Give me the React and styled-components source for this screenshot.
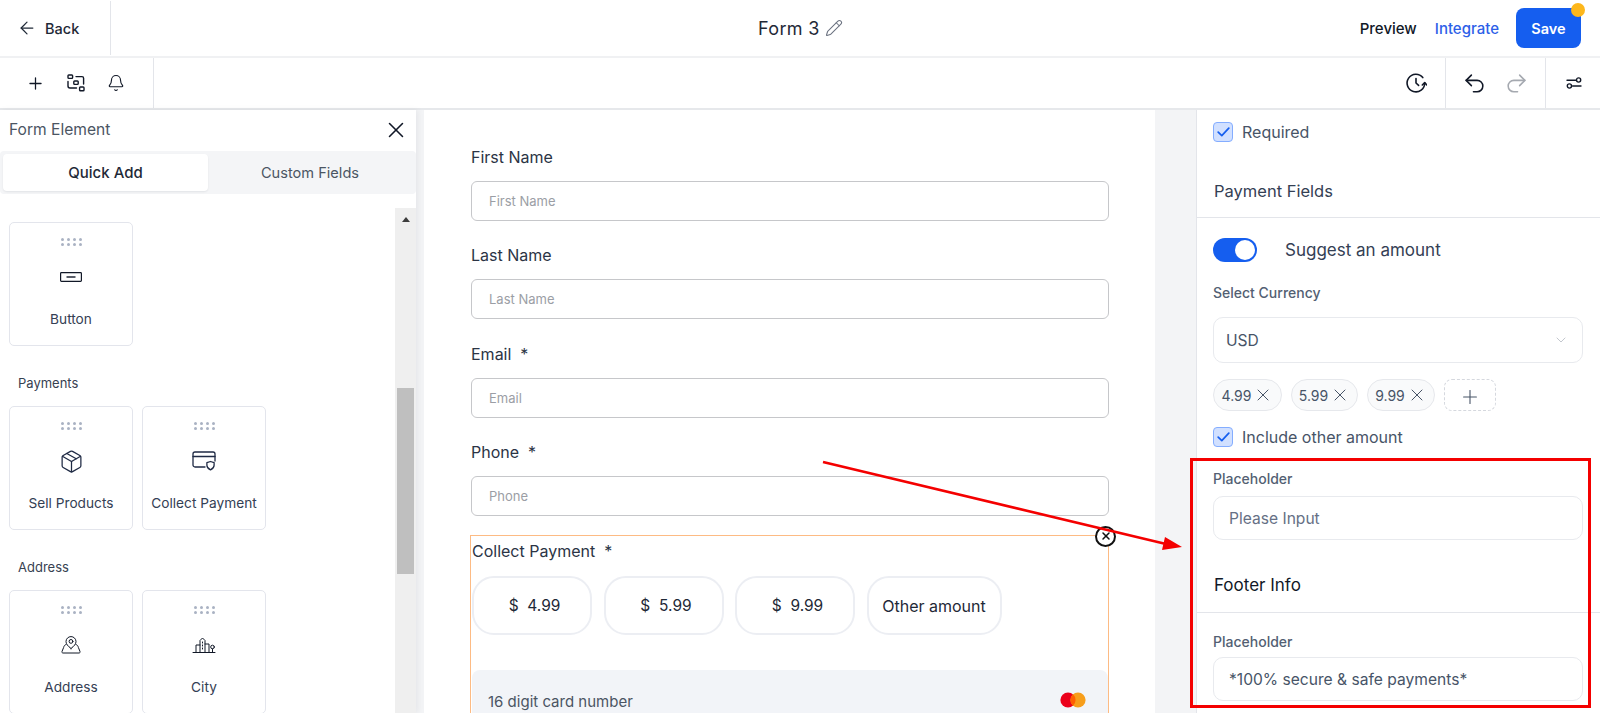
import React from "react";
import styled, { createGlobalStyle } from "styled-components";
import { ArrowLeft, Plus, Bell, Undo2, Redo2, X, Pencil, Package, ChevronDown } from "lucide-react";

const GlobalStyle = createGlobalStyle`
  html, body { margin: 0; padding: 0; background: #fff; }
  * { box-sizing: border-box; }
  body { font-family: Inter, "Noto Sans", sans-serif; color: #1f2937; }
`;

const Page = styled.div`
  position: relative;
  width: 1600px;
  height: 713px;
  overflow: hidden;
  display: flex;
  flex-direction: column;
  background: #fff;
`;

const Header = styled.header`
  height: 58px;
  flex: none;
  display: flex;
  align-items: center;
  border-bottom: 2px solid #f0f1f3;
`;

const BackSlot = styled.div`
  width: 111px;
  height: 54px;
  display: flex;
  align-items: center;
  gap: 8px;
  padding-left: 17px;
  font-size: 14.5px;
  font-weight: 500;
  color: #1f2937;
  border-right: 1px solid #e3e5ea;
`;

const Title = styled.div`
  flex: 1;
  display: flex;
  justify-content: center;
  align-items: center;
  gap: 5px;
  font-size: 18px;
  letter-spacing: 0.3px;
  color: #1f2937;
  padding-left: 130px;
  svg { color: #6b7280; }
`;

const HeaderActions = styled.div`
  display: flex;
  align-items: center;
  padding-right: 19px;
`;

const TextAction = styled.span`
  font-size: 15px;
  font-weight: 500;
  color: ${(p) => (p.$accent ? "#2d5fe8" : "#111827")};
  margin-right: ${(p) => p.$gap}px;
`;

const SaveButton = styled.div`
  position: relative;
  width: 65px;
  height: 40px;
  border-radius: 8px;
  background: #155eef;
  color: #fff;
  font-size: 14.5px;
  font-weight: 600;
  display: flex;
  align-items: center;
  justify-content: center;
`;

const SaveDot = styled.span`
  position: absolute;
  top: -5px;
  right: -4px;
  width: 14px;
  height: 14px;
  border-radius: 50%;
  background: #fdb71c;
`;

const Toolbar = styled.div`
  height: 52px;
  flex: none;
  display: flex;
  align-items: stretch;
  justify-content: space-between;
  border-bottom: 2px solid #e6e8eb;
`;

const ToolGroup = styled.div`
  display: flex;
  align-items: center;
  gap: ${(p) => p.$gap || 0}px;
  padding: ${(p) => p.$pad || "0"};
  width: ${(p) => (p.$w ? `${p.$w}px` : "auto")};
  border-right: ${(p) => (p.$right ? "1px solid #e3e5ea" : "none")};
  border-left: ${(p) => (p.$left ? "1px solid #e3e5ea" : "none")};
  color: #111827;
`;

const ToolCluster = styled.div`
  display: flex;
  align-items: stretch;
`;

const Workspace = styled.div`
  flex: 1;
  min-height: 0;
  display: flex;
  background: #f3f4f6;
`;

const LeftPanel = styled.aside`
  width: 416px;
  flex: none;
  display: flex;
  flex-direction: column;
  background: #fff;
  box-shadow: 2px 0 6px rgba(16, 24, 40, 0.06);
`;

const PanelHead = styled.div`
  height: 41px;
  flex: none;
  display: flex;
  align-items: center;
  justify-content: space-between;
  padding: 0 7px 2px 9px;
  font-size: 15.6px;
  color: #4b5563;
  svg { color: #111827; }
`;

const Tabs = styled.div`
  height: 43px;
  flex: none;
  display: flex;
  padding: 3px 0 3px 3px;
  background: #f4f5f7;
  border-radius: 4px;
`;

const Tab = styled.div`
  width: ${(p) => (p.$active ? "205px" : "auto")};
  flex: ${(p) => (p.$active ? "none" : 1)};
  display: flex;
  align-items: center;
  justify-content: center;
  padding-right: ${(p) => (p.$active ? 0 : 4)}px;
  font-size: ${(p) => (p.$active ? 15 : 14.6)}px;
  font-weight: ${(p) => (p.$active ? 500 : 400)};
  color: ${(p) => (p.$active ? "#1f2937" : "#4b5563")};
  background: ${(p) => (p.$active ? "#fff" : "transparent")};
  border-radius: 4px;
  box-shadow: ${(p) => (p.$active ? "0 1px 2px rgba(16,24,40,.08)" : "none")};
`;

const PaletteArea = styled.div`
  flex: 1;
  min-height: 0;
  display: flex;
`;

const Palette = styled.div`
  flex: 1;
  overflow: hidden;
  padding: 28px 0 0 9px;
`;

const CardRow = styled.div`
  display: flex;
  gap: 9px;
`;

const GroupLabel = styled.div`
  height: 60px;
  padding: 27px 0 0 9px;
  font-size: 13px;
  line-height: 20px;
  color: #374151;
`;

const ElementCard = styled.div`
  width: 124px;
  height: 124px;
  flex: none;
  display: flex;
  flex-direction: column;
  align-items: center;
  border: 1px solid #e3e5ec;
  border-radius: 5px;
  background: #fff;
  padding-top: 15px;
`;

const Grip = styled.div`
  display: grid;
  grid-template-columns: repeat(4, 3px);
  gap: 2px 3px;
  margin-bottom: 16px;
  i {
    width: 3px;
    height: 3px;
    border-radius: 50%;
    background: #aab2c3;
  }
`;

const CardIcon = styled.div`
  height: 30px;
  display: flex;
  align-items: center;
  justify-content: center;
  color: #1f2a44;
`;

const CardName = styled.div`
  margin-top: 18px;
  font-size: 13.7px;
  line-height: 18px;
  color: #344054;
  white-space: nowrap;
`;

const ScrollTrack = styled.div`
  width: 21px;
  flex: none;
  margin-top: 14px;
  background: #efefef;
  display: flex;
  flex-direction: column;
  align-items: center;
`;

const ScrollArrow = styled.div`
  margin-top: 9px;
  width: 0;
  height: 0;
  border-left: 4px solid transparent;
  border-right: 4px solid transparent;
  border-bottom: 5px solid #3d3d3d;
`;

const ScrollThumb = styled.div`
  width: 17px;
  height: 186px;
  margin-top: 166px;
  background: #bfbfbf;
`;

const FormCard = styled.main`
  width: 731px;
  flex: none;
  margin-left: 8px;
  background: #fff;
  padding: 35.5px 46px 0 47px;
  overflow: hidden;
`;

const Field = styled.div`
  height: 98.5px;
`;

const FieldLabel = styled.div`
  font-size: 16px;
  line-height: 22px;
  color: #2b3445;
  margin-bottom: 13px;
`;

const InputBox = styled.div`
  height: 40px;
  border: 1px solid #c6c7ca;
  border-radius: 6px;
  display: flex;
  align-items: center;
  padding: 0 17px;
  font-size: 13px;
  color: #9b9ea5;
`;

const PaymentBox = styled.section`
  position: relative;
  height: 240px;
  margin: -5px 0 0 -1px;
  border: 1px solid #fdbb84;
  padding: 4.5px 0 0 1px;
`;

const PaymentLabel = styled(FieldLabel)`
  margin-bottom: 14px;
`;

const CloseBubble = styled.div`
  position: absolute;
  top: -10px;
  right: -8px;
  width: 21px;
  height: 21px;
  border-radius: 50%;
  border: 2px solid #111;
  background: #fff;
  color: #111;
  display: flex;
  align-items: center;
  justify-content: center;
`;

const AmountRow = styled.div`
  display: flex;
  gap: 11.5px;
`;

const AmountOption = styled.div`
  width: ${(p) => (p.$wide ? "135px" : "120px")};
  height: 59px;
  border: 2px solid #eceef3;
  border-radius: 22px;
  display: flex;
  align-items: center;
  justify-content: center;
  padding-left: ${(p) => (p.$wide ? 0 : 5)}px;
  font-size: ${(p) => (p.$wide ? 16 : 15.5)}px;
  color: #1f2937;
  white-space: pre;
`;

const CardNumber = styled.div`
  height: 70px;
  margin-top: 35px;
  background: #f2f4f8;
  border-radius: 8px;
  display: flex;
  align-items: flex-start;
  justify-content: space-between;
  padding: 22px 22px 0 16px;
  font-size: 15px;
  line-height: 20px;
  color: #4b5563;
`;

const RightPanel = styled.aside`
  width: 404px;
  flex: none;
  margin-left: 41px;
  background: #fff;
  border-left: 1px solid #e3e5ea;
  overflow: hidden;
`;

const CheckRow = styled.div`
  display: flex;
  align-items: center;
  gap: 9px;
  height: 20px;
  padding-left: 16px;
  margin-top: ${(p) => p.$top || 0}px;
  font-size: 16px;
  color: #475467;
`;

const CheckBox = styled.span`
  width: 20px;
  height: 20px;
  border: 1px solid #84adff;
  border-radius: 4px;
  background: #d1e0ff;
  color: #155eef;
  display: flex;
  align-items: center;
  justify-content: center;
`;

const SectionTitle = styled.div`
  height: ${(p) => p.$h}px;
  margin-top: ${(p) => p.$top}px;
  padding-left: 17px;
  font-size: ${(p) => (p.$dark ? 17 : 16.5)}px;
  line-height: 22px;
  color: ${(p) => (p.$dark ? "#111827" : "#344054")};
  border-bottom: 1px solid #e3e5ea;
`;

const ToggleRow = styled.div`
  display: flex;
  align-items: center;
  gap: 28px;
  height: 24px;
  margin-top: 20px;
  padding-left: 16px;
  font-size: 17px;
  color: #344054;
`;

const Toggle = styled.span`
  position: relative;
  width: 44px;
  height: 24px;
  border-radius: 12px;
  background: #155eef;
  &::after {
    content: "";
    position: absolute;
    top: 2px;
    right: 2px;
    width: 20px;
    height: 20px;
    border-radius: 50%;
    background: #fff;
  }
`;

const SmallLabel = styled.div`
  margin-top: ${(p) => p.$top}px;
  padding-left: 16px;
  font-size: 14px;
  font-weight: 500;
  line-height: 20px;
  color: #535f73;
`;

const PanelInput = styled.div`
  height: ${(p) => p.$h || 44}px;
  margin: ${(p) => p.$top}px 17px 0 16px;
  border: 1px solid #e8eaee;
  border-radius: 10px;
  display: flex;
  align-items: center;
  justify-content: space-between;
  padding: 0 13px 0 ${(p) => p.$left || 15}px;
  font-size: 15.6px;
  color: ${(p) => p.$color || "#475467"};
  svg { color: #b4b9c2; }
`;

const ChipRow = styled.div`
  display: flex;
  gap: 9px;
  margin: 16px 0 0 16px;
`;

const Chip = styled.div`
  width: ${(p) => p.$w}px;
  height: 32px;
  border: 1px solid #e6e8ec;
  border-radius: 16px;
  background: #f9fafb;
  display: flex;
  align-items: center;
  justify-content: center;
  gap: 2px;
  font-size: 14px;
  color: #475467;
  svg { color: #475467; }
`;

const AddChip = styled.div`
  width: 52px;
  height: 32px;
  border: 1px dashed #d5d8de;
  border-radius: 8px;
  display: flex;
  align-items: center;
  justify-content: center;
  padding-top: 3px;
  color: #475467;
`;

const RedFrame = styled.div`
  position: absolute;
  left: 1190px;
  top: 458px;
  width: 401px;
  height: 250px;
  border: 3px solid #f40000;
  pointer-events: none;
`;

const ArrowLayer = styled.svg`
  position: absolute;
  left: 800px;
  top: 440px;
  pointer-events: none;
`;

const HistoryIcon = () => (
  <svg width="22" height="22" viewBox="0 0 22 22" fill="none" stroke="currentColor" strokeWidth="1.6" strokeLinecap="round" strokeLinejoin="round">
    <path d="M17.8 5.6A8.8 8.8 0 1 0 19.7 11" />
    <path d="M11 6.5V11l2.6 2.4" />
    <path d="M17.3 13l2.4-2.4 2.1 2.4" />
  </svg>
);

const SettingsIcon = () => (
  <svg width="16" height="12" viewBox="0 0 16 12" fill="none" stroke="currentColor" strokeWidth="1.4" strokeLinecap="round">
    <path d="M1 3.2h8.6" />
    <circle cx="12.6" cy="3" r="2.1" />
    <path d="M6.6 9h8.4" />
    <circle cx="3.4" cy="9" r="2.1" />
  </svg>
);

const ElementsIcon = () => (
  <svg width="18" height="18" viewBox="0 0 18 18" fill="none" stroke="currentColor" strokeWidth="1.4" strokeLinecap="round" strokeLinejoin="round">
    <rect x="1" y="1" width="4.6" height="3.4" rx=".8" />
    <rect x="6.8" y="7" width="4.4" height="3.4" rx=".8" />
    <rect x="12.6" y="13" width="4.4" height="3.8" rx=".8" />
    <path d="M9 2.6h6a1.6 1.6 0 0 1 1.6 1.6V10M1 7.5V12a2 2 0 0 0 2 2h6.5" />
  </svg>
);

const ButtonIcon = () => (
  <svg width="22" height="10" viewBox="0 0 22 10" fill="none" stroke="#111827" strokeWidth="1.2">
    <rect x=".6" y=".6" width="20.8" height="8.8" rx=".8" />
    <path d="M6.5 5h9" strokeWidth="1.4" />
  </svg>
);

const CardShieldIcon = () => (
  <svg width="24" height="20" viewBox="0 0 24 20" fill="none" stroke="currentColor" strokeWidth="1.3" strokeLinecap="round" strokeLinejoin="round">
    <path d="M13 16H3a2 2 0 0 1-2-2V3a2 2 0 0 1 2-2h18a2 2 0 0 1 2 2v7" />
    <path d="M1 5.5h22" />
    <path d="M18.5 10.5l3.6 1.2v2.6c0 2-1.5 3.6-3.6 4.6-2.1-1-3.6-2.6-3.6-4.6v-2.6z" />
  </svg>
);

const AddressIcon = () => (
  <svg width="20" height="18" viewBox="0 0 20 18" fill="none" stroke="#111827" strokeWidth="1" strokeLinecap="round" strokeLinejoin="round">
    <path d="M10 12.5C6.8 10 5 8 5 5.6a5 5 0 0 1 10 0C15 8 13.2 10 10 12.5z" />
    <circle cx="10" cy="5.4" r="1.9" />
    <path d="M5 8.5c-1.5.5-2 1.5-2.4 3L1 15.5c-.3 1 .3 1.5 1 1.5h16c.7 0 1.3-.5 1-1.5l-1.6-4c-.4-1.5-.9-2.5-2.4-3" />
  </svg>
);

const CityIcon = () => (
  <svg width="24" height="16" viewBox="0 0 24 16" fill="none" stroke="#111827" strokeWidth="1" strokeLinecap="round" strokeLinejoin="round">
    <path d="M1 15.5h22" />
    <path d="M4 15.5V8h4M8 15.5V3.5L10.5 1 13 3.5v12M13 7h4v8.5" />
    <path d="M10.5 5v1M10.5 8v1M10.5 11v1" />
    <circle cx="20.5" cy="10" r="1.8" />
    <path d="M20.5 12v3.5" />
  </svg>
);

const MasterCard = () => (
  <svg width="26" height="16" viewBox="0 0 26 16">
    <circle cx="8" cy="8" r="7.6" fill="#eb001b" />
    <circle cx="18" cy="8" r="7.6" fill="#f79e1b" />
    <path d="M13 2.3a7.6 7.6 0 0 1 0 11.4 7.6 7.6 0 0 1 0-11.4z" fill="#ff5f00" />
  </svg>
);

const Check = () => (
  <svg width="13" height="10" viewBox="0 0 13 10" fill="none" stroke="currentColor" strokeWidth="1.7" strokeLinecap="round" strokeLinejoin="round">
    <path d="M1.2 5.2l3.6 3.4 7-7.4" />
  </svg>
);

const GripDots = () => (
  <Grip>
    {Array.from({ length: 8 }).map((_, i) => (
      <i key={i} />
    ))}
  </Grip>
);

const PaletteCard = ({ icon, name }) => (
  <ElementCard>
    <GripDots />
    <CardIcon>{icon}</CardIcon>
    <CardName>{name}</CardName>
  </ElementCard>
);

const fields = [
  { label: "First Name", hint: "First Name" },
  { label: "Last Name", hint: "Last Name" },
  { label: "Email\u00a0 *", hint: "Email" },
  { label: "Phone\u00a0 *", hint: "Phone" },
];

const chips = [
  { value: "4.99", w: 69 },
  { value: "5.99", w: 67 },
  { value: "9.99", w: 68 },
];

const App = () => {
  return (
    <Page>
      <GlobalStyle />
      <Header>
        <BackSlot>
          <ArrowLeft size={20} strokeWidth={1.5} />
          Back
        </BackSlot>
        <Title>
          Form 3
          <Pencil size={18} strokeWidth={1.4} />
        </Title>
        <HeaderActions>
          <TextAction $gap={18}>Preview</TextAction>
          <TextAction $accent $gap={17}>Integrate</TextAction>
          <SaveButton>
            Save
            <SaveDot />
          </SaveButton>
        </HeaderActions>
      </Header>

      <Toolbar>
        <ToolGroup $right $w={154} $gap={22} $pad="0 0 0 26px">
          <Plus size={19} strokeWidth={1.6} />
          <ElementsIcon />
          <Bell size={18} strokeWidth={1.5} />
        </ToolGroup>
        <ToolCluster>
          <ToolGroup $pad="0 18px 0 0">
            <HistoryIcon />
          </ToolGroup>
          <ToolGroup $left $w={100} $gap={17} $pad="0 0 0 16px">
            <Undo2 size={25} strokeWidth={1.5} />
            <Redo2 size={25} strokeWidth={1.5} color="#a5a9b0" />
          </ToolGroup>
          <ToolGroup $left $w={55} $pad="0 0 0 20px">
            <SettingsIcon />
          </ToolGroup>
        </ToolCluster>
      </Toolbar>

      <Workspace>
        <LeftPanel>
          <PanelHead>
            Form Element
            <X size={26} strokeWidth={1.4} />
          </PanelHead>
          <Tabs>
            <Tab $active>Quick Add</Tab>
            <Tab>Custom Fields</Tab>
          </Tabs>
          <PaletteArea>
            <Palette>
              <CardRow>
                <PaletteCard icon={<ButtonIcon />} name="Button" />
              </CardRow>
              <GroupLabel>Payments</GroupLabel>
              <CardRow>
                <PaletteCard icon={<Package size={25} strokeWidth={1.2} />} name="Sell Products" />
                <PaletteCard icon={<CardShieldIcon />} name="Collect Payment" />
              </CardRow>
              <GroupLabel>Address</GroupLabel>
              <CardRow>
                <PaletteCard icon={<AddressIcon />} name="Address" />
                <PaletteCard icon={<CityIcon />} name="City" />
              </CardRow>
            </Palette>
            <ScrollTrack>
              <ScrollArrow />
              <ScrollThumb />
            </ScrollTrack>
          </PaletteArea>
        </LeftPanel>

        <FormCard>
          {fields.map((f) => (
            <Field key={f.hint}>
              <FieldLabel>{f.label}</FieldLabel>
              <InputBox>{f.hint}</InputBox>
            </Field>
          ))}
          <PaymentBox>
            <CloseBubble>
              <X size={12} strokeWidth={3} />
            </CloseBubble>
            <PaymentLabel>Collect Payment&nbsp; *</PaymentLabel>
            <AmountRow>
              <AmountOption>$  4.99</AmountOption>
              <AmountOption>$  5.99</AmountOption>
              <AmountOption>$  9.99</AmountOption>
              <AmountOption $wide>Other amount</AmountOption>
            </AmountRow>
            <CardNumber>
              16 digit card number
              <MasterCard />
            </CardNumber>
          </PaymentBox>
        </FormCard>

        <RightPanel>
          <CheckRow $top={12}>
            <CheckBox><Check /></CheckBox>
            Required
          </CheckRow>
          <SectionTitle $top={38} $h={38}>Payment Fields</SectionTitle>
          <ToggleRow>
            <Toggle />
            Suggest an amount
          </ToggleRow>
          <SmallLabel $top={21}>Select Currency</SmallLabel>
          <PanelInput $top={14} $h={46} $left={12}>
            USD
            <ChevronDown size={16} strokeWidth={1.2} />
          </PanelInput>
          <ChipRow>
            {chips.map((c) => (
              <Chip key={c.value} $w={c.w}>
                {c.value}
                <X size={20} strokeWidth={1.2} />
              </Chip>
            ))}
            <AddChip>
              <Plus size={22} strokeWidth={1.2} />
            </AddChip>
          </ChipRow>
          <CheckRow $top={16}>
            <CheckBox><Check /></CheckBox>
            Include other amount
          </CheckRow>
          <SmallLabel $top={22}>Placeholder</SmallLabel>
          <PanelInput $top={7} $color="#667085">Please Input</PanelInput>
          <SectionTitle $top={34} $h={39} $dark>Footer Info</SectionTitle>
          <SmallLabel $top={19}>Placeholder</SmallLabel>
          <PanelInput $top={5}>*100% secure &amp; safe payments*</PanelInput>
        </RightPanel>
      </Workspace>

      <RedFrame />
      <ArrowLayer width="400" height="130" viewBox="0 0 400 130">
        <path d="M23 22L366 104" stroke="#f40000" strokeWidth="2.6" />
        <path d="M382 107L365 97L362 110z" fill="#f40000" />
      </ArrowLayer>
    </Page>
  );
};

export default App;
